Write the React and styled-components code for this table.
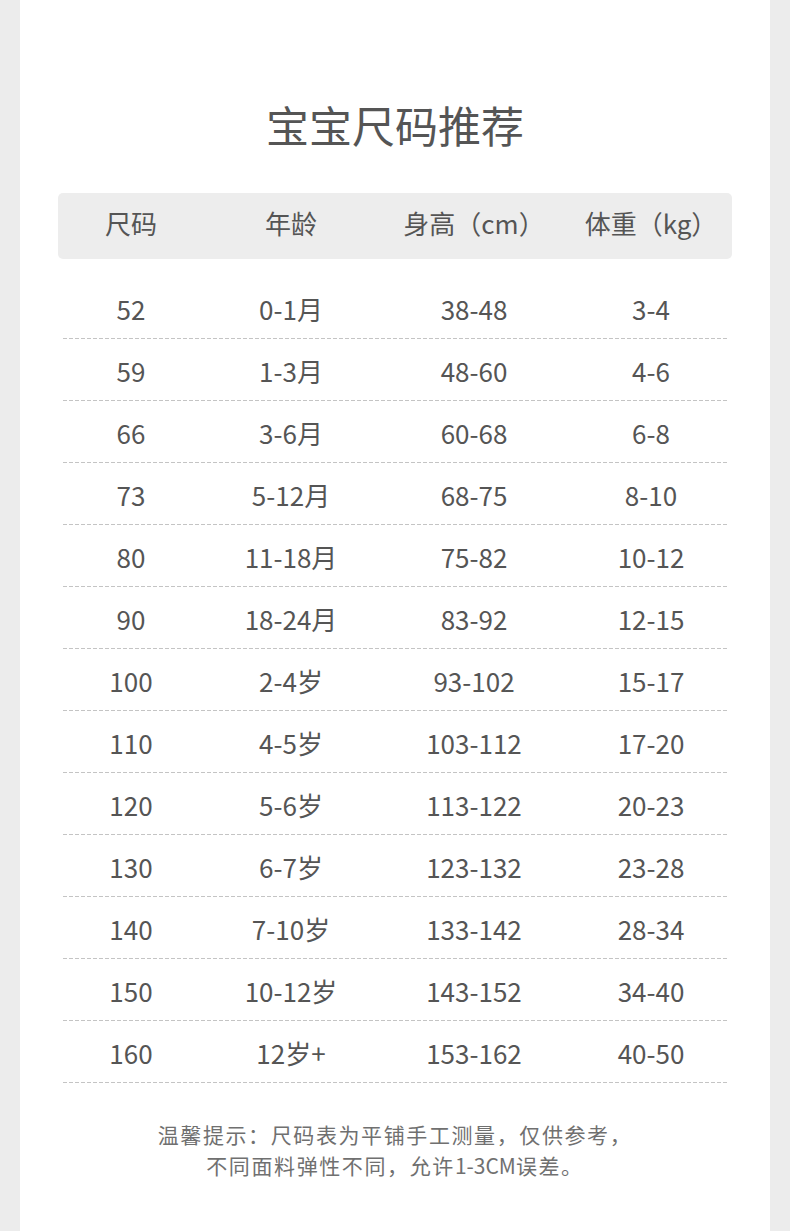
import React from "react";
import styled, { createGlobalStyle } from "styled-components";

const Global = createGlobalStyle`
  html, body { margin: 0; padding: 0; background: #ececec; }
  body { font-family: "Noto Sans CJK SC", "Noto Sans", sans-serif; }
`;

const Page = styled.div`
  width: 790px;
  min-height: 1231px;
  padding: 0 20px;
  box-sizing: border-box;
`;

const Card = styled.div`
  background: #fff;
  min-height: 1231px;
  padding: 94px 38px 0;
  box-sizing: border-box;
`;

const Title = styled.h1`
  margin: 0 0 39px;
  text-align: center;
  font-weight: 400;
  font-size: 43px;
  line-height: 60px;
  color: #555;
`;

const COLS = "146px 174px 192px 1fr";

const HeaderRow = styled.div`
  display: grid;
  grid-template-columns: ${COLS};
  align-items: center;
  height: 66px;
  padding-bottom: 6px;
  box-sizing: border-box;
  background: #ededed;
  border-radius: 5px;
  margin-bottom: 18px;
`;

const Row = styled.div`
  display: grid;
  grid-template-columns: ${COLS};
  align-items: center;
  height: 62px;
  padding-top: 2px;
  box-sizing: border-box;
  background-image: repeating-linear-gradient(
    to right,
    #c4c4c4 0 4px,
    transparent 4px 6px
  );
  background-size: calc(100% - 10px) 1px;
  background-position: 5px 100%;
  background-repeat: no-repeat;
`;

const Cell = styled.div`
  text-align: center;
  font-size: 26px;
  color: #555;
  line-height: 1.2;
  white-space: nowrap;
`;

const Note = styled.div`
  margin-top: 36px;
  text-align: center;
  font-size: 21px;
  letter-spacing: 1.6px;
  line-height: 31px;
  color: #707070;
`;

const Latin = styled.span`
  letter-spacing: 0;
`;

const headers = ["尺码", "年龄", "身高（cm）", "体重（kg）"];

const rows = [
  ["52", "0-1月", "38-48", "3-4"],
  ["59", "1-3月", "48-60", "4-6"],
  ["66", "3-6月", "60-68", "6-8"],
  ["73", "5-12月", "68-75", "8-10"],
  ["80", "11-18月", "75-82", "10-12"],
  ["90", "18-24月", "83-92", "12-15"],
  ["100", "2-4岁", "93-102", "15-17"],
  ["110", "4-5岁", "103-112", "17-20"],
  ["120", "5-6岁", "113-122", "20-23"],
  ["130", "6-7岁", "123-132", "23-28"],
  ["140", "7-10岁", "133-142", "28-34"],
  ["150", "10-12岁", "143-152", "34-40"],
  ["160", "12岁+", "153-162", "40-50"],
];

export default function App() {
  return (
    <Page>
      <Global />
      <Card>
        <Title>宝宝尺码推荐</Title>
        <HeaderRow>
          {headers.map((h) => (
            <Cell key={h}>{h}</Cell>
          ))}
        </HeaderRow>
        {rows.map((r) => (
          <Row key={r[0]}>
            {r.map((c, i) => (
              <Cell key={i}>{c}</Cell>
            ))}
          </Row>
        ))}
        <Note>
          温馨提示：尺码表为平铺手工测量，仅供参考，
          <br />
          不同面料弹性不同，允许<Latin>1-3CM</Latin>误差。
        </Note>
      </Card>
    </Page>
  );
}
